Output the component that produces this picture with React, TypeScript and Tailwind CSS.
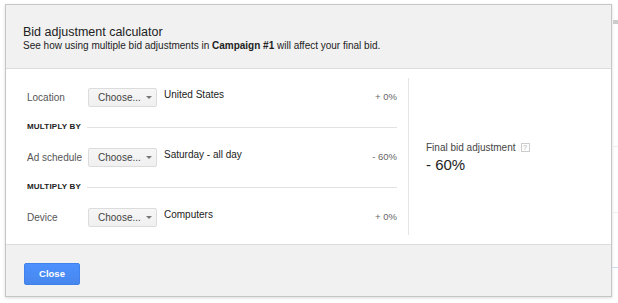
const FONT = { fontFamily: '"Liberation Sans", Arial, sans-serif' };

type Row = { label: string; value: string; pct: string };

const ROWS: Row[] = [
  { label: 'Location', value: 'United States', pct: '+ 0%' },
  { label: 'Ad schedule', value: 'Saturday - all day', pct: '- 60%' },
  { label: 'Device', value: 'Computers', pct: '+ 0%' },
];

function ChooseButton() {
  return (
    <div className="w-[69px] h-[19px] flex items-center pl-[9px] border border-[#dcdcdc] rounded-[2px] bg-gradient-to-b from-[#f6f6f6] to-[#f0f0f0] text-[10px] text-[#444]">
      <span>Choose...</span>
      <span className="ml-[5px] w-0 h-0 border-l-[3px] border-r-[3px] border-t-[3px] border-l-transparent border-r-transparent border-t-[#777]" />
    </div>
  );
}

function AdjustRow({ row }: { row: Row }) {
  return (
    <div className="flex items-start h-[19px]">
      <div className="w-[61px] h-[19px] flex items-center text-[10px] text-[#555]">{row.label}</div>
      <ChooseButton />
      <div className="ml-[7px] text-[10px] leading-[12px] text-[#222] pt-[1px]">{row.value}</div>
      <div className="ml-auto h-[19px] flex items-center text-[9.5px] text-[#666]">{row.pct}</div>
    </div>
  );
}

function MultiplyBy() {
  return (
    <div className="flex items-center h-[10px]">
      <span className="text-[8px] font-bold tracking-[0.2px] text-[#222]">MULTIPLY BY</span>
      <div className="flex-1 ml-[6px] h-px bg-[#e2e2e2]" />
    </div>
  );
}

export default function App() {
  return (
    <div className="relative w-[618px] h-[303px] bg-white overflow-hidden" style={FONT}>
      {/* faint page behind the dialog */}
      <div className="absolute left-[613px] top-[20px] w-[5px] h-[4px] bg-[#ccc]" />
      <div className="absolute left-[612px] top-[146px] w-[6px] h-px bg-[#eee]" />
      <div className="absolute left-[612px] top-[212px] w-[6px] h-px bg-[#eee]" />
      <div className="absolute left-[612px] top-[267px] w-[6px] h-px bg-[#c9dcf3]" />

      <div className="ml-[5px] mt-[4px] w-[607px] h-[293px] flex flex-col border border-[#c6c6c6] shadow-[0_1px_3px_rgba(0,0,0,0.15)] bg-white">
        <div className="h-[64px] bg-[#f1f1f1] border-b border-[#dcdcdc] pl-[17px] pt-[20px]">
          <div className="text-[12.5px] leading-[14px] text-[#222]">Bid adjustment calculator</div>
          <div className="text-[10px] leading-[12px] text-[#222] mt-[1px]">
            See how using multiple bid adjustments in <span className="font-bold">Campaign #1</span> will affect your final bid.
          </div>
        </div>

        <div className="flex-1 flex py-[9px]">
          <div className="w-[402px] pl-[21px] pr-[11px] pt-[10px] flex flex-col">
            <AdjustRow row={ROWS[0]} />
            <div className="mt-[15px]"><MultiplyBy /></div>
            <div className="mt-[16px]"><AdjustRow row={ROWS[1]} /></div>
            <div className="mt-[15px]"><MultiplyBy /></div>
            <div className="mt-[16px]"><AdjustRow row={ROWS[2]} /></div>
          </div>
          <div className="flex-1 border-l border-[#e5e5e5] pl-[17px] flex flex-col justify-center">
            <div className="flex items-center text-[10px] text-[#444]">
              <span>Final bid adjustment</span>
              <span className="ml-[5px] w-[9px] h-[9px] border border-[#ccc] text-[7px] leading-[7px] text-[#aaa] flex items-center justify-center">?</span>
            </div>
            <div className="text-[15px] leading-[17px] text-[#222] mt-[1px]">- 60%</div>
          </div>
        </div>

        <div className="h-[52px] bg-[#f1f1f1] border-t border-[#dcdcdc] pl-[18px] pt-[15px]">
          <button className="w-[56px] h-[22px] rounded-[2px] border border-[#3f82ee] bg-gradient-to-b from-[#4d90fe] to-[#4787ed] text-white text-[9.5px] font-bold">
            Close
          </button>
        </div>
      </div>
    </div>
  );
}
